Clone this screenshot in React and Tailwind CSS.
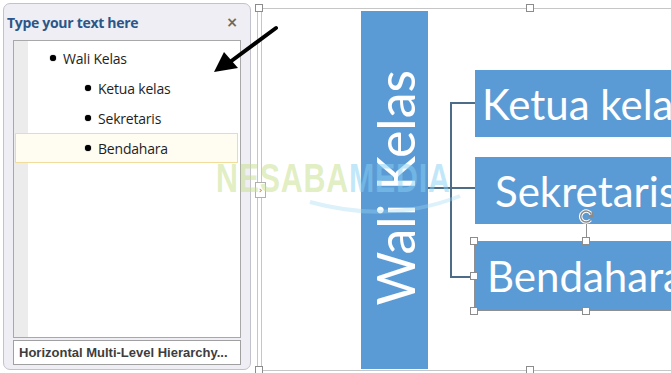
const Handle = ({ className }) => (
  <div className={`absolute w-[8px] h-[8px] bg-white border border-[#8c8c8c] ${className}`} />
)

const items = [
  { text: 'Wali Kelas', level: 1 },
  { text: 'Ketua kelas', level: 2 },
  { text: 'Sekretaris', level: 2 },
  { text: 'Bendahara', level: 2, selected: true },
]

const TextPane = () => (
  <div className="flex-none mt-[3px] ml-[3px] w-[248px] h-[367px] rounded-[7px] border border-[#c2c2cc] bg-[#eeeef4] flex flex-col">
    <div className="h-[36px] flex items-center justify-between pl-[3px] pr-[12px]">
      <span className="font-['Open_Sans',sans-serif] font-bold text-[14px] tracking-[-0.3px] text-[#2b5788]">
        Type your text here
      </span>
      <span className="font-['DejaVu_Sans',sans-serif] font-bold text-[14px] leading-none text-[#6a6a6a]">×</span>
    </div>
    <div className="ml-[9px] w-[228px] h-[298px] border border-[#a8a8a8] bg-[linear-gradient(to_right,#ececec_14px,#ffffff_14px)] pt-[2px]">
      {items.map((item) => (
        <div
          key={item.text}
          className={`ml-[1px] mr-[2px] h-[30px] flex items-center border ${
            item.selected ? 'border-[#f2dc9c] bg-[#fffdf2]' : 'border-transparent'
          } ${item.level === 1 ? 'pl-[34px]' : 'pl-[69px]'}`}
        >
          <span className="w-[6px] h-[6px] rounded-full bg-black shadow-[0_0_1px_#000]" />
          <span className="ml-[7px] font-['Open_Sans',sans-serif] text-[14px] tracking-[-0.2px] text-[#1e1e1e]">{item.text}</span>
        </div>
      ))}
    </div>
    <div className="ml-[9px] mt-[2px] w-[228px] h-[25px] border border-[#a0a0a0] bg-white flex items-center pl-[5px]">
      <span className="font-['Liberation_Sans',sans-serif] font-bold text-[13px] text-[#3d3d3d] whitespace-nowrap">
        Horizontal Multi-Level Hierarchy...
      </span>
    </div>
  </div>
)

const Box = ({ children, className = '', pad }) => (
  <div className={`relative w-[260px] h-[67px] bg-[#5b9bd5] flex items-center ${pad} ${className}`}>
    <span className="font-['Lato',sans-serif] text-[42px] leading-none text-white whitespace-nowrap">{children}</span>
  </div>
)

const Diagram = () => (
  <div className="flex-none ml-[6px] mt-[8px] w-[420px] h-[363px] border-l border-t border-b border-[#c6c6c6]">
    <div className="ml-[3px] h-full border-l border-[#c6c6c6] flex items-start">
      <div className="flex-none ml-[99px] mt-[2px] w-[67px] h-[358px] bg-[#5b9bd5] flex items-center justify-center pb-[5px]">
        <span className="[writing-mode:vertical-rl] rotate-180 font-['Lato',sans-serif] text-[52px] leading-none text-white whitespace-nowrap">
          Wali Kelas
        </span>
      </div>
      <svg className="flex-none" width="47" height="300" viewBox="0 0 47 300">
        <g stroke="#4d6c87" strokeWidth="2" fill="none">
          <line x1="0" y1="179" x2="47" y2="179" />
          <line x1="23" y1="93" x2="23" y2="269" />
          <line x1="23" y1="94" x2="47" y2="94" />
          <line x1="23" y1="268" x2="47" y2="268" />
        </g>
      </svg>
      <div className="flex-none flex flex-col mt-[61px]">
        <Box pad="pl-[7px]">Ketua kelas</Box>
        <Box pad="pl-[20px]" className="mt-[20px]">Sekretaris</Box>
        <Box pad="pl-[12px]" className="mt-[18px] h-[68px]">
          Bendahara
          <div className="absolute -left-[1px] -top-[1px] w-[300px] h-[70px] border border-[#8f8f8f]" />
          <Handle className="-left-[5px] -top-[5px]" />
          <Handle className="left-[107px] -top-[5px]" />
          <Handle className="-left-[5px] top-[30px]" />
          <Handle className="-left-[5px] -bottom-[5px]" />
          <Handle className="left-[107px] -bottom-[5px]" />
          <div className="absolute left-[111px] -top-[20px] w-[1px] h-[15px] bg-[#8f8f8f]" />
          <svg className="absolute left-[103px] -top-[33px]" width="17" height="16" viewBox="0 0 17 16">
            <path d="M12.5 11 A5.5 5.5 0 1 1 13.3 5.5" stroke="#ffffff" strokeWidth="3.5" fill="none" />
            <path d="M12.5 11 A5.5 5.5 0 1 1 13.3 5.5" stroke="#8a8a8a" strokeWidth="1.4" fill="none" />
            <path d="M10.2 7 L14.5 7.4 L14.2 3" stroke="#8a8a8a" strokeWidth="1.4" fill="none" />
          </svg>
        </Box>
      </div>
    </div>
  </div>
)

export default function App() {
  return (
    <div className="relative flex w-[671px] h-[373px] overflow-hidden bg-white">
      <TextPane />
      <Diagram />

      {/* frame handles */}
      <Handle className="left-[255px] top-[4px]" />
      <Handle className="left-[526px] top-[4px]" />
      <Handle className="left-[255px] top-[366px]" />
      <Handle className="left-[526px] top-[366px]" />
      <div className="absolute left-[255px] top-[182px] w-[11px] h-[16px] bg-white border border-[#b0b0b0] flex items-center justify-center">
        <span className="font-['DejaVu_Sans',sans-serif] text-[9px] leading-none text-[#777]">›</span>
      </div>

      {/* watermark */}
      <div className="absolute left-[216px] top-[158px] pointer-events-none whitespace-nowrap origin-left scale-x-[0.76] font-['Liberation_Sans',sans-serif] font-bold text-[40px] leading-none tracking-[1px]">
        <span className="text-[#c9df8f]/55">NESABA</span>
        <span className="text-[#86cff3]/50">MEDIA</span>
      </div>
      <svg className="absolute left-[300px] top-[190px] pointer-events-none" width="170" height="30" viewBox="0 0 170 30">
        <path d="M10 12 Q90 34 160 6" stroke="#9fd6f3" strokeOpacity="0.35" strokeWidth="4" fill="none" />
      </svg>

      {/* arrow */}
      <svg className="absolute left-[205px] top-[20px] pointer-events-none" width="80" height="60" viewBox="0 0 80 60">
        <line x1="71" y1="8" x2="25" y2="42" stroke="#000" strokeWidth="4" strokeLinecap="round" />
        <polygon points="9,52 19,32 33,48" fill="#000" />
      </svg>
    </div>
  )
}
